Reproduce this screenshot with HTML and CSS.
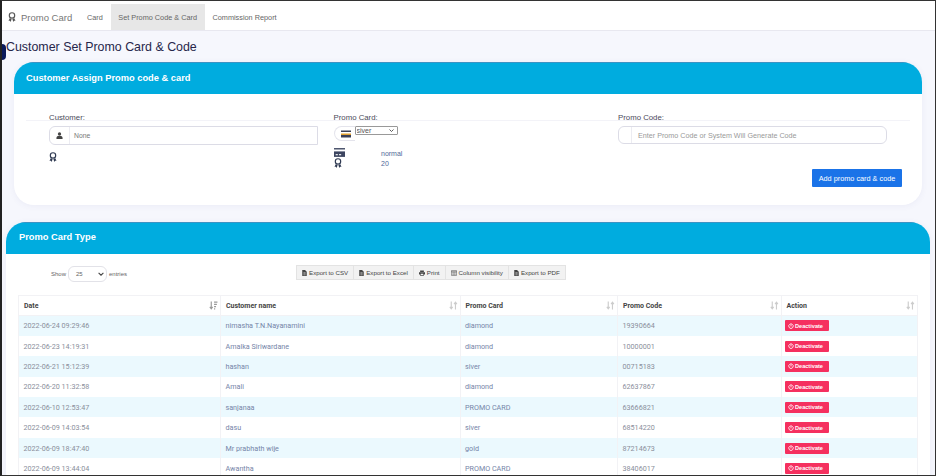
FILE: index.html
```html
<!DOCTYPE html>
<html lang="en">
<head>
    <meta charset="UTF-8">
    <meta name="viewport" content="width=device-width, initial-scale=1.0">
    <title>Customer Set Promo Card &amp; Code</title>
    <link rel="stylesheet" href="styles.css">
</head>
<body>
    <svg class="defs" width="0" height="0">
        <symbol id="award" viewBox="0 0 16 20">
            <circle cx="8" cy="6.8" r="5.4" fill="none" stroke="currentColor" stroke-width="2.3"/>
            <path d="M3.8 12 1 17.5l2.8-.2L5.2 20l2-5.500zM12.200 12l2.800 5.500-2.800-.2-1.400 2.700-2-5.500z" fill="currentColor"/>
        </symbol>
        <symbol id="card" viewBox="0 0 20 16">
            <rect x="0" y="0" width="20" height="2.5" fill="currentColor"/>
            <rect x="0" y="6" width="20" height="10" fill="currentColor"/>
            <rect x="3" y="11" width="4" height="2" fill="#fff"/>
            <rect x="9" y="11" width="4" height="2" fill="#fff"/>
        </symbol>
        <symbol id="card-gold" viewBox="0 0 20 16">
            <rect x="0" y="1" width="20" height="3" fill="#3a3f55"/>
            <rect x="0" y="7" width="20" height="3" fill="#e0a030"/>
            <rect x="0" y="10" width="20" height="5" fill="#3a3f55"/>
        </symbol>
        <symbol id="user" viewBox="0 0 16 16">
            <circle cx="8" cy="4.5" r="3.8" fill="currentColor"/>
            <path d="M1 16v-2.5C1 10.500 3.500 9 5.500 9h5c2 0 4.500 1.500 4.500 4.500V16z" fill="currentColor"/>
        </symbol>
        <symbol id="file" viewBox="0 0 12 16">
            <path d="M0 0h7.500L12 4.500V16H0z" fill="currentColor"/>
            <path d="M3 7h6M3 10h6M3 13h6" stroke="#f2f2f2" stroke-width="1.3"/>
        </symbol>
        <symbol id="print" viewBox="0 0 16 16">
            <path d="M3 1h10v4H3zM0 6h16v6h-3v3H3v-3H0z" fill="currentColor"/>
            <path d="M4.500 10h7v3.500h-7z" fill="#f2f2f2"/>
        </symbol>
        <symbol id="table" viewBox="0 0 16 14">
            <path d="M.8.800h14.400v12.400H.8zM.8 4h14.400M5.600 4v9M10.400 4v9" fill="none" stroke="currentColor" stroke-width="1.5"/>
        </symbol>
        <symbol id="power" viewBox="0 0 16 16">
            <path d="M5 3.200a6 6 0 1 0 6 0" fill="none" stroke="currentColor" stroke-width="2.2" stroke-linecap="round"/>
            <path d="M8 1v7" stroke="currentColor" stroke-width="2.2" stroke-linecap="round"/>
        </symbol>
        <symbol id="sort" viewBox="0 0 16 16">
            <path d="M4 1v12M1.500 10.500 4 14l2.500-3.500M11.500 15V3M9 5.500 11.500 2 14 5.500" fill="none" stroke="currentColor" stroke-width="2"/>
        </symbol>
        <symbol id="sort-desc" viewBox="0 0 16 16">
            <path d="M4 1v12M1.500 10.500 4 14l2.500-3.500" fill="none" stroke="currentColor" stroke-width="2"/>
            <path d="M9 2h6M9 6h5M9 10h3.500M9 14h2" stroke="currentColor" stroke-width="1.8"/>
        </symbol>
    </svg>

    <div class="frame">
        <span class="side-tab"></span>

        <nav class="navbar">
            <a class="brand" href="#"><svg class="brand-icon"><use href="#award"/></svg>Promo Card</a>
            <a class="nav-link" href="#">Card</a>
            <a class="nav-link active" href="#">Set Promo Code &amp; Card</a>
            <a class="nav-link" href="#">Commission Report</a>
        </nav>

        <h1 class="page-title">Customer Set Promo Card &amp; Code</h1>

        <section class="card assign">
            <h2 class="card-header">Customer Assign Promo code &amp; card</h2>
            <div class="card-body">
                <div class="fields">
                    <div class="field">
                        <label class="field-label">Customer:</label>
                        <div class="input-group square">
                            <span class="addon"><svg class="addon-icon"><use href="#user"/></svg></span>
                            <span class="input-text">None</span>
                        </div>
                        <svg class="award-small"><use href="#award"/></svg>
                    </div>
                    <div class="field">
                        <label class="field-label">Promo Card:</label>
                        <div class="select-group">
                            <span class="addon short"><svg class="addon-card"><use href="#card-gold"/></svg></span>
                            <select class="card-select"><option>siver</option></select>
                        </div>
                        <div class="card-info">
                            <div class="info-icons">
                                <svg class="info-card"><use href="#card"/></svg>
                                <svg class="info-award"><use href="#award"/></svg>
                            </div>
                            <div class="info-text">
                                <p>normal</p>
                                <p>20</p>
                            </div>
                        </div>
                    </div>
                    <div class="field">
                        <label class="field-label">Promo Code:</label>
                        <div class="input-group">
                            <span class="addon blank"></span>
                            <span class="input-text placeholder">Enter Promo Code or System Will Generate Code</span>
                        </div>
                    </div>
                </div>
                <div class="form-actions">
                    <button class="btn-add">Add promo card &amp; code</button>
                </div>
            </div>
        </section>

        <section class="card types">
            <h2 class="card-header">Promo Card Type</h2>
            <div class="table-tools">
                <div class="length">
                    Show
                    <span class="length-select">25<svg class="chev" viewBox="0 0 10 6"><path d="M1 1l4 4 4-4" fill="none" stroke="currentColor" stroke-width="1.8"/></svg></span>
                    entries
                </div>
                <div class="export-buttons">
                    <button><svg class="btn-icon"><use href="#file"/></svg>Export to CSV</button>
                    <button><svg class="btn-icon"><use href="#file"/></svg>Export to Excel</button>
                    <button><svg class="btn-icon wide"><use href="#print"/></svg>Print</button>
                    <button><svg class="btn-icon wide"><use href="#table"/></svg>Column visibility</button>
                    <button><svg class="btn-icon"><use href="#file"/></svg>Export to PDF</button>
                </div>
            </div>
            <table class="promo-table">
                <thead>
                    <tr>
                        <th class="col-date">Date<svg class="sort dark"><use href="#sort-desc"/></svg></th>
                        <th class="col-name">Customer name<svg class="sort"><use href="#sort"/></svg></th>
                        <th class="col-card">Promo Card<svg class="sort"><use href="#sort"/></svg></th>
                        <th class="col-code">Promo Code<svg class="sort"><use href="#sort"/></svg></th>
                        <th class="col-action">Action<svg class="sort"><use href="#sort"/></svg></th>
                    </tr>
                </thead>
                <tbody id="rows"></tbody>
            </table>
        </section>
    </div>

    <script>
        const rows = [
            ['2022-06-24 09:29:46', 'nimasha T.N.Nayanamini', 'diamond', '19390664'],
            ['2022-06-23 14:19:31', 'Amalka Siriwardane', 'diamond', '10000001'],
            ['2022-06-21 15:12:39', 'hashan', 'siver', '00715183'],
            ['2022-06-20 11:32:58', 'Amali', 'diamond', '62637867'],
            ['2022-06-10 12:53:47', 'sanjanaa', 'PROMO CARD', '63666821'],
            ['2022-06-09 14:03:54', 'dasu', 'siver', '68514220'],
            ['2022-06-09 18:47:40', 'Mr prabhath wije', 'gold', '87214673'],
            ['2022-06-09 13:44:04', 'Awantha', 'PROMO CARD', '38406017']
        ];

        const tbody = document.querySelector('#rows');

        rows.forEach(function (row) {
            const tr = document.createElement('tr');
            row.forEach(function (value) {
                const td = document.createElement('td');
                td.textContent = value;
                tr.appendChild(td);
            });
            const action = document.createElement('td');
            action.innerHTML = '<button class="btn-deactivate"><svg class="power"><use href="#power"/></svg>Deactivate</button>';
            tr.appendChild(action);
            tbody.appendChild(tr);
        });
    </script>
</body>
</html>
```

FILE: styles.css
```css
* {
    margin: 0;
    padding: 0;
    box-sizing: border-box;
}
html, body {
    height: 100%;
    overflow: hidden;
}
body {
    font-family: "Liberation Sans", Arial, sans-serif;
    background-color: #fff;
}
.defs {
    position: absolute;
}
.frame {
    position: relative;
    height: 476px;
    overflow: hidden;
    background-color: #f6f7fd;
    border: 1px solid #333;
    border-left: 2px solid #222;
}
.side-tab {
    position: absolute;
    left: -2px;
    top: 43px;
    width: 6px;
    height: 16px;
    border-radius: 0 4px 4px 0;
    background-color: #0a1a5c;
}

/* navbar */
.navbar {
    display: flex;
    align-items: stretch;
    height: 30px;
    padding-top: 3px;
    background-color: #fff;
    border-bottom: 1px solid #e8e8f0;
}
.navbar a {
    text-decoration: none;
    display: flex;
    align-items: center;
}
.brand {
    color: #777;
    font-size: 9.5px;
    width: 77px;
    padding-left: 6px;
}
.brand-icon {
    width: 8px;
    height: 10px;
    margin-right: 5px;
    color: #555;
}
.nav-link {
    color: #666;
    font-size: 7.3px;
    padding: 0 8px;
}
.nav-link.active {
    background-color: #e7e7e7;
    padding: 0 7.5px;
}

.page-title {
    font-size: 12.4px;
    font-weight: 400;
    color: #26264a;
    padding: 9px 0 0 4px;
    height: 31px;
}

/* cards */
.card {
    background-color: #fff;
    border-radius: 20px;
    overflow: hidden;
    box-shadow: 0 1px 6px rgba(80, 90, 160, 0.07);
}
.card-header {
    height: 32px;
    line-height: 30px;
    background-color: #00acdf;
    border-top: 1px solid #3b93c4;
    color: #fff;
    font-size: 9.3px;
    font-weight: 700;
}
.assign {
    margin: 0 13px 0 12px;
    height: 143px;
}
.assign .card-header {
    padding-left: 12px;
}
.types {
    margin: 17px 5px 0 4px;
    height: 300px;
    border-radius: 20px 20px 0 0;
}
.types .card-header {
    line-height: 28px;
    padding-left: 13px;
}

/* form */
.card-body {
    padding: 19px 12px 0;
}
.fields {
    display: grid;
    grid-template-columns: 269px 269px 269px;
    gap: 15.5px;
    padding: 0 23px;
    height: 56px;
    background: linear-gradient(#f3f3f8, #f3f3f8) 0 7px / 100% 1px no-repeat;
}
.field-label {
    display: block;
    height: 13px;
    font-size: 7.8px;
    color: #4a4a5a;
    line-height: 9px;
}
.input-group {
    display: flex;
    align-items: center;
    height: 18px;
    background-color: #fff;
    border: 1px solid #dcdce6;
    border-radius: 6px;
}
.input-group.square {
    height: 19px;
    border-radius: 6px 0 0 6px;
}
.addon {
    display: flex;
    align-items: center;
    justify-content: center;
    width: 20px;
    height: 100%;
    border-right: 1px solid #ececf2;
    color: #444;
}
.addon.blank {
    width: 13px;
}
.addon-icon {
    width: 7px;
    height: 7px;
    color: #444;
}
.input-text {
    font-size: 6.8px;
    color: #777;
    padding-left: 4px;
}
.placeholder {
    font-size: 7.2px;
    color: #999;
    padding-left: 6px;
}
.award-small {
    display: block;
    width: 8px;
    height: 10px;
    margin-top: 7px;
    color: #2f3a52;
}
.select-group {
    display: flex;
    align-items: flex-start;
    height: 15px;
}
.addon.short {
    width: 21px;
    height: 15px;
    border: 1px solid #e4e4ec;
    border-right: 0;
    border-radius: 8px 0 0 8px;
    padding-left: 3px;
}
.addon-card {
    width: 10px;
    height: 8px;
}
.card-select {
    appearance: none;
    width: 43px;
    height: 9px;
    padding-left: 1px;
    font-family: "Liberation Sans", Arial, sans-serif;
    font-size: 7px;
    line-height: 7px;
    color: #555;
    background: #fff url("data:image/svg+xml,%3Csvg xmlns='http://www.w3.org/2000/svg' viewBox='0 0 10 6'%3E%3Cpath d='M1 1l4 4 4-4' fill='none' stroke='%23333' stroke-width='1.6'/%3E%3C/svg%3E") no-repeat right 3px center / 5px 3px;
    border: 1px solid #999;
    border-radius: 1px;
}
.card-info {
    display: flex;
    margin-top: 7px;
}
.info-icons {
    display: flex;
    flex-direction: column;
    width: 47.5px;
    gap: 1px;
}
.info-card {
    width: 11px;
    height: 9px;
    color: #3c4560;
}
.info-award {
    width: 8px;
    height: 10px;
    color: #2f3a52;
}
.info-text {
    font-size: 7px;
    line-height: 10px;
    color: #4f6898;
    padding-top: 1px;
}
.form-actions {
    display: flex;
    justify-content: flex-end;
    padding-right: 8px;
}
.btn-add {
    width: 90px;
    height: 18px;
    background-color: #1a73e8;
    color: #fff;
    border: 0;
    border-radius: 1px;
    font-family: "Liberation Sans", Arial, sans-serif;
    font-size: 7.3px;
}

/* datatable tools */
.table-tools {
    position: relative;
    height: 41px;
    padding: 11px 0 0 290px;
}
.length {
    position: absolute;
    left: 45px;
    top: 12px;
    display: flex;
    align-items: center;
    gap: 2px;
    font-size: 6px;
    color: #666;
}
.length-select {
    display: flex;
    align-items: center;
    justify-content: space-between;
    width: 39px;
    height: 16px;
    padding: 0 2px 0 7px;
    border: 1px solid #e2e2e8;
    border-radius: 6px;
}
.chev {
    width: 6px;
    height: 4px;
    color: #444;
}
.export-buttons {
    display: flex;
    height: 15px;
}
.export-buttons button {
    display: flex;
    align-items: center;
    padding: 0 5px;
    background-color: #f2f2f2;
    border: 1px solid #e3e3e3;
    border-left-width: 0;
    color: #444;
    font-family: "Liberation Sans", Arial, sans-serif;
    font-size: 6.2px;
}
.export-buttons button:first-child {
    border-left-width: 1px;
}
.btn-icon {
    width: 5px;
    height: 6px;
    margin-right: 2px;
    color: #444;
}
.btn-icon.wide {
    width: 6px;
}

/* table */
.promo-table {
    width: 899px;
    margin-left: 12px;
    table-layout: fixed;
    border-collapse: collapse;
    font-family: Roboto, "Liberation Sans", sans-serif;
}
.col-date { width: 202px; }
.col-name { width: 239.5px; }
.col-card { width: 157.5px; }
.col-code { width: 163.5px; }
.col-action { width: 136.5px; }
.promo-table th {
    position: relative;
    height: 20px;
    padding-left: 5px;
    text-align: left;
    font-size: 7px;
    font-weight: 700;
    color: #444;
    border: 1px solid #f2f2f5;
}
.promo-table td {
    height: 20.4px;
    padding: 0 0 0 4.5px;
    font-size: 7.2px;
    color: #8a8f9c;
    border-left: 1px solid #f2f2f5;
    border-right: 1px solid #f2f2f5;
    overflow: hidden;
}
.promo-table td:nth-child(2),
.promo-table td:nth-child(3) {
    color: #7585a8;
}
.promo-table tbody tr:nth-child(odd) {
    background-color: #ebf9fe;
}
.promo-table td:last-child {
    padding-left: 3px;
}
.sort {
    position: absolute;
    right: 2px;
    top: 5px;
    width: 9px;
    height: 9px;
    color: #ccc;
}
.sort.dark {
    color: #999;
}
.btn-deactivate {
    display: flex;
    align-items: center;
    width: 44px;
    height: 11px;
    padding-left: 3px;
    background-color: #f5305f;
    color: #fff;
    border: 0;
    border-radius: 1px;
    font-family: "Liberation Sans", Arial, sans-serif;
    font-size: 5.6px;
    font-weight: 700;
}
.power {
    width: 6px;
    height: 6px;
    margin-right: 1.5px;
}
```
